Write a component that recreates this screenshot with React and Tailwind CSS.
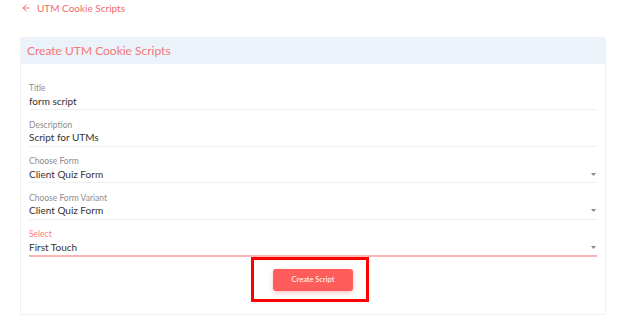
import React from "react";

function Caret() {
  return (
    <svg width="5" height="3" viewBox="0 0 5 3" className="mr-[1px]">
      <path d="M0 0 L5 0 L2.5 3 Z" fill="#8a8a8a" />
    </svg>
  );
}

function Field({ label, value, select, active, last }) {
  return (
    <div className={last ? "mb-[7px]" : "mb-[9.5px]"}>
      <div className={`h-[10px] text-[8.5px] leading-[10px] ${active ? "text-[#ff8080]" : "text-[#8d8d8d]"}`}>{label}</div>
      <div
        className={`flex items-center justify-between text-[10px] leading-[17px] text-[#333] ${
          active ? "border-b-2 border-[#ffb3b3] h-[18px]" : "border-b border-[#f0f0f0] h-[17px]"
        }`}
      >
        <span>{value}</span>
        {select && <Caret />}
      </div>
    </div>
  );
}

export default function App() {
  return (
    <div className="w-[624px] h-[333px] bg-white font-['Lato',sans-serif] overflow-hidden">
      <div className="flex h-[16px] items-center pl-[21px] text-[10px] text-[#f56b6b]">
        <svg width="10" height="10" viewBox="0 0 24 24" fill="none" stroke="#f56b6b" strokeWidth="2.4" strokeLinecap="round" strokeLinejoin="round">
          <path d="M19 12H5" />
          <path d="M12 19l-7-7 7-7" />
        </svg>
        <span className="ml-[6px]">UTM Cookie Scripts</span>
      </div>
      <div className="ml-[20px] mt-[21px] w-[586px] border border-[#efefef] rounded-t-[3px]">
        <div className="flex h-[26px] items-center bg-[#ebf2f9] px-[6px] text-[12px] text-[#f47777]">
          Create UTM Cookie Scripts
        </div>
        <div className="px-[8px] pt-[19px]">
          <Field label="Title" value="form script" />
          <Field label="Description" value="Script for UTMs" />
          <Field label="Choose Form" value="Client Quiz Form" select />
          <Field label="Choose Form Variant" value="Client Quiz Form" select />
          <Field label="Select" value="First Touch" select active last />
        </div>
        <div className="flex justify-center pb-[23px]">
          <div className="relative">
            <button className="h-[22px] w-[80px] rounded-[3px] bg-[#ff5c5c] text-[7.5px] text-white shadow-[0_2px_5px_rgba(255,92,92,0.35)]">
              Create Script
            </button>
            <div className="absolute left-[-22px] top-[-7px] h-[45px] w-[118px] border-[3px] border-[#ff0000]" />
          </div>
        </div>
      </div>
    </div>
  );
}
